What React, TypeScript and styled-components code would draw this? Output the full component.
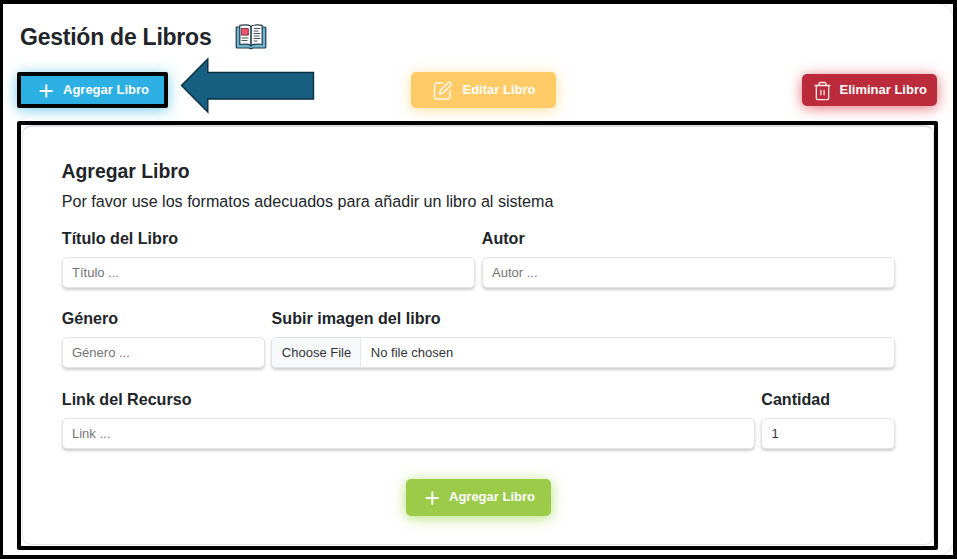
import React from "react";
import styled, { createGlobalStyle } from "styled-components";

const GlobalStyle = createGlobalStyle`
  *, *::before, *::after { box-sizing: border-box; }
  body { margin: 0; background: #fff; overflow: hidden; }
  body, input, button { font-family: "Liberation Sans", Arial, sans-serif; }
  h1, h2, p { margin: 0; }
`;

const Page = styled.div`
  position: relative;
  width: 957px;
  height: 559px;
  border: 4px solid #000;
  border-left-width: 3px;
  background: #fff;
  color: #212529;
`;

const Surface = styled.main`
  height: 551px;
  padding: 17px 15px 5px 14px;
  border-radius: 0 15px 15px 0;
  box-shadow: 0 0 2px rgba(0, 0, 0, 0.25);
`;

const Header = styled.header`
  display: flex;
  align-items: center;
  gap: 24px;
  height: 32px;
  padding-left: 3px;
`;

const Title = styled.h1`
  font-size: 23px;
  letter-spacing: -0.24px;
  line-height: 32px;
  white-space: nowrap;
`;

const Toolbar = styled.div`
  display: flex;
  align-items: flex-start;
  justify-content: space-between;
  height: 37px;
  margin: 19px 1px 12px 0;
`;

const palette = {
  blue: { fill: "#2cafe3", glow: "rgba(44,175,227,.65)" },
  yellow: { fill: "#ffcb66", glow: "rgba(255,203,90,.6)" },
  red: { fill: "#bc2b3b", glow: "rgba(220,53,69,.7)" },
  green: { fill: "#9bcb48", glow: "rgba(155,213,72,.75)" },
};

const Button = styled.button<{
  $tone: keyof typeof palette;
  $width: number;
  $height: number;
  $framed?: boolean;
  $pad: number;
  $gap: number;
}>`
  display: flex;
  align-items: center;
  flex: none;
  gap: ${(p) => p.$gap}px;
  width: ${(p) => p.$width}px;
  height: ${(p) => p.$height}px;
  padding: 0 0 0 ${(p) => p.$pad}px;
  border: ${(p) => (p.$framed ? "4px solid #000" : "0")};
  border-radius: ${(p) => (p.$framed ? 2 : 5)}px;
  background: ${(p) => palette[p.$tone].fill};
  box-shadow: 0 2px 14px ${(p) => palette[p.$tone].glow};
  color: #fff;
  font-size: 13px;
  font-weight: 700;
  line-height: 16px;
  white-space: nowrap;

  svg { flex: none; margin-top: 1px; }
`;

const EditSlot = styled.div`
  margin-left: -4px;
`;

const DeleteSlot = styled.div`
  padding-top: 2px;
`;

const Panel = styled.section`
  width: 921px;
  height: 429px;
  border: 4px solid #000;
  border-radius: 2px;
`;

const Card = styled.div`
  height: 420px;
  margin-left: 1px;
  padding: 32px 38px 0 38.5px;
  border: 1px solid #e3e3e3;
  border-top: 2px solid #dedede;
  border-radius: 9px;
`;

const CardTitle = styled.h2`
  font-size: 19.4px;
  line-height: 24px;
  margin-bottom: 8px;
`;

const Intro = styled.p`
  font-size: 16.13px;
  line-height: 20px;
  padding-left: 0.3px;
  margin-bottom: 17px;
`;

const FormRow = styled.div<{ $columns: string }>`
  display: grid;
  grid-template-columns: ${(p) => p.$columns};
  gap: 6.5px;
  height: 80.4px;
`;

const Field = styled.label`
  display: block;
  min-width: 0;
`;

const Label = styled.span`
  display: block;
  font-size: 16.1px;
  font-weight: 700;
  line-height: 20px;
  padding-left: 0.3px;
  margin-bottom: 9px;
`;

const control = `
  width: 100%;
  height: 31px;
  border: 1px solid #e2e4e7;
  border-radius: 5px;
  background: #fff;
  box-shadow: 0 2px 3px rgba(0, 0, 0, 0.2);
  color: #303438;
  font-size: 13px;
`;

const Input = styled.input`
  ${control}
  display: block;
  padding: 0 9.5px;
  outline: none;
  &::placeholder { color: #747474; opacity: 1; }
`;

const FilePicker = styled.span`
  ${control}
  display: flex;
  overflow: hidden;
  line-height: 29px;
`;

const FileButton = styled.span`
  width: 89px;
  padding-left: 9.5px;
  border-right: 1px solid #e5e7ea;
  background: #f8f9fb;
`;

const FileName = styled.span`
  padding-left: 9.5px;
`;

const Actions = styled.div`
  display: flex;
  padding: 9.8px 0 0 344.5px;
`;

const Pointer = styled.svg`
  position: absolute;
  left: 176px;
  top: 52px;
`;

const PlusIcon = () => (
  <svg width="14" height="14" viewBox="0 0 14 14" stroke="#fff" strokeWidth="2" strokeLinecap="round">
    <path d="M7.3 1.2v11.6M1.5 7h11.6" />
  </svg>
);

const EditIcon = () => (
  <svg width="20" height="20" viewBox="0 0 20 20" fill="none" stroke="#fff" strokeOpacity=".85" strokeWidth="1.5" strokeLinecap="round" strokeLinejoin="round">
    <path d="M9.5 2H3.5a2 2 0 0 0-2 2v12a2 2 0 0 0 2 2H15a2 2 0 0 0 2-2v-6" />
    <path d="m6.5 13 1-3.6L15 1.8a1.7 1.7 0 0 1 2.7 2.5L10.2 11.9Z" />
  </svg>
);

const TrashIcon = () => (
  <svg width="17" height="20" viewBox="0 0 17 20" fill="none" stroke="#fff" strokeOpacity=".9" strokeWidth="1.3" strokeLinecap="round" strokeLinejoin="round">
    <path d="M1 4.5h15M5 4V2.8A1.3 1.3 0 0 1 6.3 1.5h4.4A1.3 1.3 0 0 1 12 2.8V4M2.3 4.7v12a2 2 0 0 0 2 2h8.4a2 2 0 0 0 2-2v-12M6.9 9.5v4.3M10.1 9.5v4.3" />
  </svg>
);

const BookIcon = () => (
  <svg width="32" height="26" viewBox="0 0 32 26" strokeLinejoin="round" strokeLinecap="round">
    <path d="M4 3H2.2Q1.2 3 1.2 4v19q0 1 1 1H14l1 .6h2l1-.6h11.8q1 0 1-1V4q0-1-1-1H28Z" fill="#6db5d0" stroke="#253849" strokeWidth="1.2" />
    <path d="M4.8 1.3Q13 .3 16 2.2 19 .3 27.2 1.3V20.5Q19 19.5 16 21.5 13 19.5 4.8 20.5Z" fill="#fbfcfc" stroke="#253849" strokeWidth="1.2" />
    <path d="M16 2.5V22" stroke="#253849" strokeWidth="1.6" />
    <rect x="6.8" y="4.5" width="6.5" height="6.6" fill="#f4516e" stroke="#6b3040" strokeWidth=".9" />
    <path d="M7 14h6M7 16.5h5M19.5 4.5h5.5M19 7H23M19 9.5h6M19 12h5M19 14.5h6M19 17h3" stroke="#48545c" strokeWidth="1" />
  </svg>
);

export default function App() {
  return (
    <>
      <GlobalStyle />
      <Page>
        <Surface>
          <Header>
            <Title>Gestión de Libros</Title>
            <BookIcon />
          </Header>
          <Toolbar>
            <Button $tone="blue" $width={151} $height={36} $pad={18} $gap={10} $framed>
              <PlusIcon />
              Agregar Libro
            </Button>
            <EditSlot>
              <Button $tone="yellow" $width={145} $height={36} $pad={22} $gap={10}>
                <EditIcon />
                Editar Libro
              </Button>
            </EditSlot>
            <DeleteSlot>
              <Button $tone="red" $width={135} $height={32} $pad={12} $gap={8.5}>
                <TrashIcon />
                Eliminar Libro
              </Button>
            </DeleteSlot>
          </Toolbar>
          <Panel>
            <Card>
              <CardTitle>Agregar Libro</CardTitle>
              <Intro>Por favor use los formatos adecuados para añadir un libro al sistema</Intro>
              <FormRow $columns="1fr 1fr">
                <Field>
                  <Label>Título del Libro</Label>
                  <Input placeholder="Título ..." />
                </Field>
                <Field>
                  <Label>Autor</Label>
                  <Input placeholder="Autor ..." />
                </Field>
              </FormRow>
              <FormRow $columns="203.3px 1fr">
                <Field>
                  <Label>Género</Label>
                  <Input placeholder="Género ..." />
                </Field>
                <Field as="div">
                  <Label>Subir imagen del libro</Label>
                  <FilePicker>
                    <FileButton>Choose File</FileButton>
                    <FileName>No file chosen</FileName>
                  </FilePicker>
                </Field>
              </FormRow>
              <FormRow $columns="1fr 134px">
                <Field>
                  <Label>Link del Recurso</Label>
                  <Input placeholder="Link ..." />
                </Field>
                <Field>
                  <Label>Cantidad</Label>
                  <Input defaultValue="1" />
                </Field>
              </FormRow>
              <Actions>
                <Button $tone="green" $width={145} $height={37} $pad={19} $gap={10}>
                  <PlusIcon />
                  Agregar Libro
                </Button>
              </Actions>
            </Card>
          </Panel>
        </Surface>
        <Pointer width="136" height="60" viewBox="0 0 136 60">
          <path d="M2.5 29.5 28.8 3V16.5H134.5V43H28.8V56Z" fill="#176082" stroke="#092e42" strokeWidth="1.4" />
        </Pointer>
      </Page>
    </>
  );
}
